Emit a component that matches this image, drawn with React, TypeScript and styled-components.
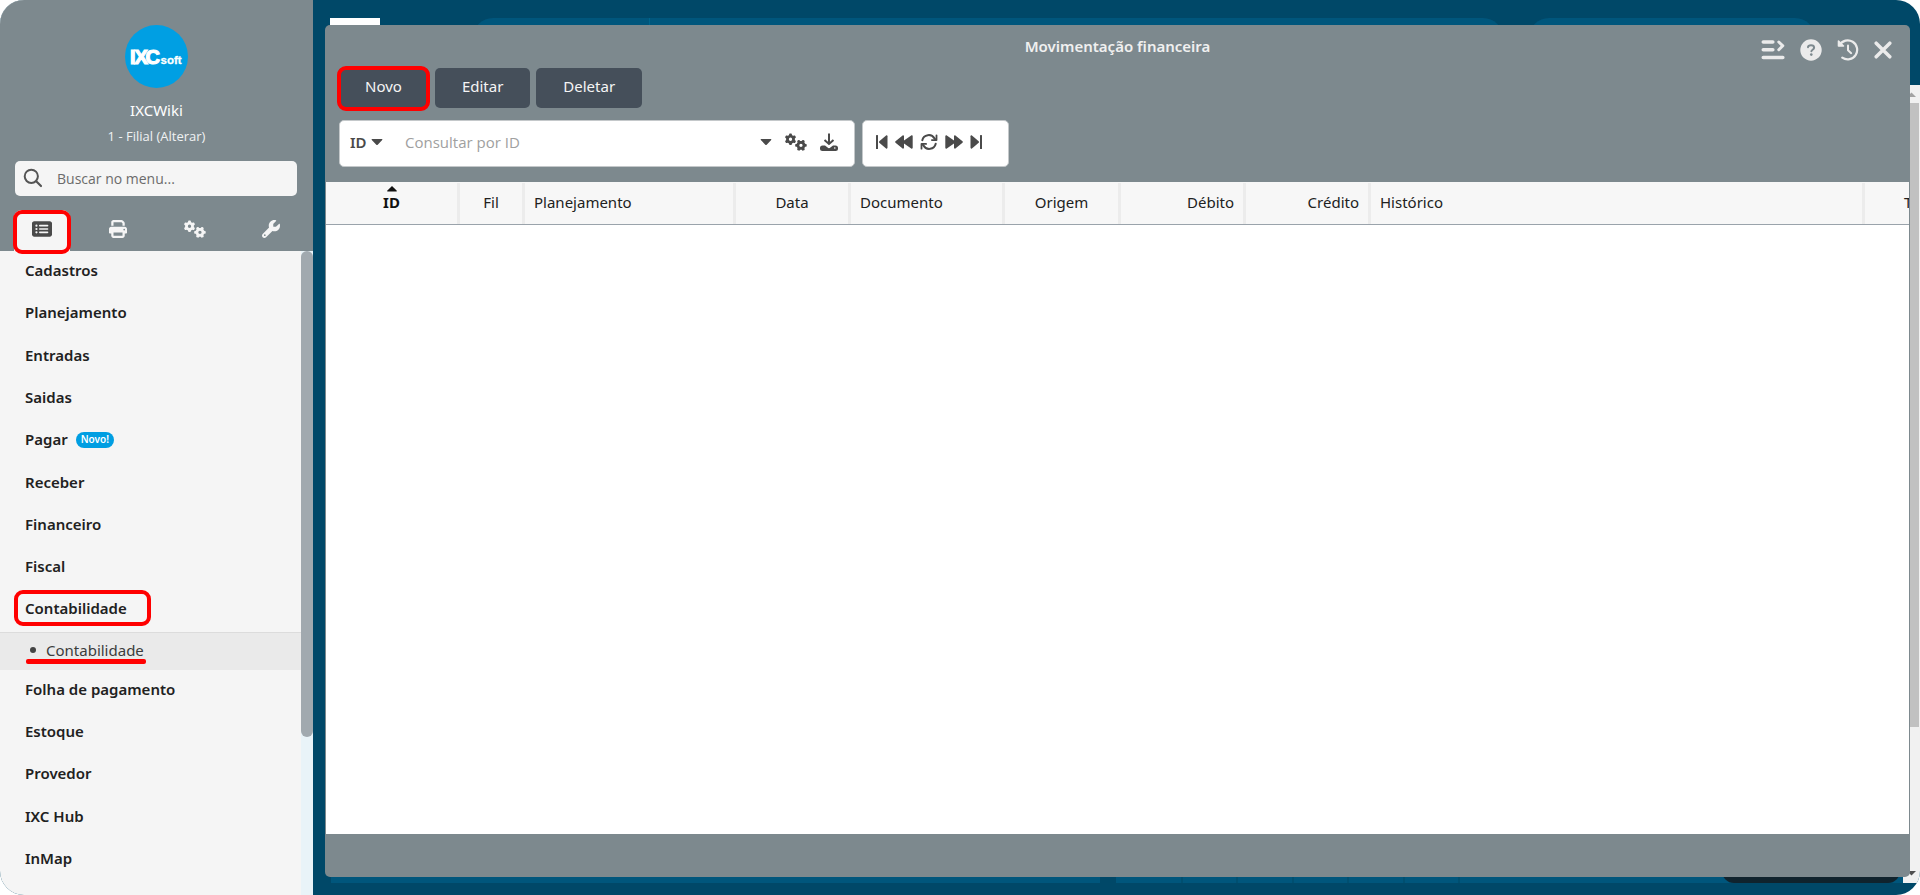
import React from "react";
import styled, { createGlobalStyle, css } from "styled-components";
import { FaRectangleList, FaPrint, FaGears, FaWrench } from "react-icons/fa6";

const Global = createGlobalStyle`
  *, *::before, *::after { box-sizing: border-box; }
  body { margin: 0; background: #fff; font-family: "Noto Sans", "Open Sans", sans-serif; font-size: 15px; }
  button, input, select { font: inherit; }
  button { border: 0; margin: 0; padding: 0; background: none; cursor: pointer; }
  ul { list-style: none; margin: 0; padding: 0; }
`;

const Screen = styled.div`
  position: relative;
  display: flex;
  min-height: 100vh;
  height: 100vh;
  border-radius: 24px;
  overflow: hidden;
  background: #004868;
`;

/* ---------- sidebar ---------- */
const Sidebar = styled.aside`
  flex: 0 0 313px;
  display: flex;
  flex-direction: column;
  background: #f5f5f5;
`;

const Profile = styled.header`
  display: flex;
  flex-direction: column;
  align-items: center;
  padding-top: 25px;
  background: #7d898e;
  color: #fff;
`;

const UserName = styled.div`
  margin-top: 12px;
  font-size: 15px;
  line-height: 20px;
`;

const Branch = styled.a`
  margin-top: 6px;
  font-family: "Open Sans", "Noto Sans", sans-serif;
  font-size: 13px;
  line-height: 20px;
  color: #f0f2f3;
  text-decoration: none;
`;

const SearchBox = styled.label`
  align-self: stretch;
  display: flex;
  align-items: center;
  gap: 14px;
  height: 35px;
  margin: 15px 16px 0 15px;
  padding: 0 0 1px 8px;
  border-radius: 5px;
  background: #f5f5f5;
  color: #555;
`;

const SearchInput = styled.input`
  flex: 1;
  min-width: 0;
  border: 0;
  padding: 0;
  outline: 0;
  background: transparent;
  font-family: "Open Sans", "Noto Sans", sans-serif;
  font-size: 14px;
  &::placeholder { color: #6b6b6b; opacity: 1; }
`;

const marked = css`
  &::after {
    content: "";
    position: absolute;
    border: 4px solid #ff0000;
    border-radius: 9px;
    pointer-events: none;
  }
`;

const Tabs = styled.nav`
  align-self: stretch;
  display: flex;
  gap: 20px;
  height: 41px;
  margin-top: 14px;
  padding: 0 14px;
`;

const Tab = styled.button<{ $active?: boolean }>`
  position: relative;
  flex: 1;
  display: flex;
  align-items: center;
  justify-content: center;
  padding-bottom: 3px;
  color: #f5f5f5;
  border-radius: 8px 8px 0 0;
  ${(p) => p.$active && css`
    background: #f5f5f5;
    color: #4a4a4a;
    ${marked}
    &::after { inset: 0 -1px -3px; z-index: 1; }
  `}
`;

const MenuArea = styled.div`
  flex: 1;
  min-height: 0;
  display: flex;
`;

const MenuList = styled.ul`
  flex: 1;
  min-width: 0;
  display: flex;
  flex-direction: column;
  padding-bottom: 14px;
  overflow: hidden;
`;

const MenuItem = styled.li`
  flex: 1 0 auto;
  display: flex;
  flex-direction: column;
`;

const MenuLink = styled.a`
  flex: 1 0 42px;
  display: flex;
  align-items: center;
  gap: 8px;
  padding: 0 0 4px 25px;
  font-size: 15px;
  font-weight: 600;
  line-height: 20px;
  color: #212121;
  text-decoration: none;
`;

const MenuLabel = styled.span<{ $marked?: boolean }>`
  position: relative;
  ${(p) => p.$marked && css`
    ${marked}
    &::after { inset: -8px -24px -8px -11px; }
  `}
`;

const NewTag = styled.span`
  height: 16px;
  margin-top: 2px;
  padding: 0 5px;
  border-radius: 8px;
  background: #009ee2;
  color: #fff;
  font-size: 10px;
  font-weight: 600;
  line-height: 15px;
`;

const SubLink = styled.a`
  display: flex;
  align-items: center;
  gap: 10px;
  height: 38px;
  padding: 0 0 2px 30px;
  border-top: 1px solid #dcdcdc;
  background: #eaeaea;
  color: #3c3c3c;
  font-size: 15px;
  line-height: 20px;
  text-decoration: none;
  &::before {
    content: "";
    width: 6px;
    height: 6px;
    border-radius: 3px;
    background: #444;
  }
`;

const SubLabel = styled.span`
  position: relative;
  &::after {
    content: "";
    position: absolute;
    left: -20px;
    right: -2px;
    bottom: -4px;
    height: 5px;
    border-radius: 2px;
    background: #ff0000;
  }
`;

const ScrollTrack = styled.div`
  flex: 0 0 12px;
  background: #e9f3f8;
`;

const ScrollThumb = styled.div`
  height: 75.5%;
  border-radius: 6px;
  background: #a1a9af;
`;

/* ---------- desktop behind the window ---------- */
const Desktop = styled.main`
  position: relative;
  flex: 1;
  min-width: 0;
  display: flex;
  padding: 25px 10px 18px 12px;
`;

const Shape = styled.div<{ $left?: number; $right?: number; $width?: number; $top?: number; $bottom?: number; $height: number; $color: string; $radius?: string }>`
  position: absolute;
  left: ${(p) => (p.$left === undefined ? "auto" : `${p.$left}px`)};
  right: ${(p) => (p.$right === undefined ? "auto" : `${p.$right}px`)};
  width: ${(p) => (p.$width === undefined ? "auto" : `${p.$width}px`)};
  top: ${(p) => (p.$top === undefined ? "auto" : `${p.$top}px`)};
  bottom: ${(p) => (p.$bottom === undefined ? "auto" : `${p.$bottom}px`)};
  height: ${(p) => p.$height}px;
  border-radius: ${(p) => p.$radius ?? "0"};
  background: ${(p) => p.$color};
`;

const PageScroll = styled.div`
  position: absolute;
  top: 85px;
  right: 0;
  bottom: 12px;
  width: 17px;
  display: flex;
  flex-direction: column;
  align-items: center;
  justify-content: space-between;
  background: #f1f1f1;
`;

const PageThumb = styled.div`
  flex: 0 1 624px;
  width: 15px;
  margin-bottom: auto;
  background: #c1c1c1;
`;

const ScrollArrow = styled.svg`
  flex: none;
  display: block;
`;

/* ---------- window ---------- */
const Window = styled.section`
  position: relative;
  flex: 1;
  min-width: 0;
  display: flex;
  flex-direction: column;
  border-radius: 5px;
  overflow: hidden;
  background: #7d898e;
`;

const TitleBar = styled.div`
  display: grid;
  grid-template-columns: 1fr auto 1fr;
  height: 42px;
`;

const Title = styled.h1`
  grid-column: 2;
  margin: 11px 0 0;
  font-size: 15px;
  font-weight: 600;
  line-height: 20px;
  color: #f0f0f0;
`;

const WindowActions = styled.div`
  justify-self: end;
  display: flex;
  align-items: center;
  gap: 15px;
  padding: 8px 18px 0 0;
  color: #ebebeb;
`;

const IconButton = styled.button`
  display: flex;
  align-items: center;
  justify-content: center;
  color: inherit;
`;

const Actions = styled.div`
  display: flex;
  gap: 6px;
  padding: 1px 13px 0;
`;

const ActionButton = styled.button<{ $marked?: boolean }>`
  position: relative;
  height: 40px;
  padding: 0 27px 4px;
  border-radius: 5px;
  background: #454f5a;
  color: #f5f5f5;
  font-size: 15px;
  ${(p) => p.$marked && css`
    ${marked}
    &::after { inset: -2px -1px -3px; }
  `}
`;

const Toolbar = styled.div`
  display: flex;
  gap: 7px;
  padding: 12px 14px 15px;
`;

const Group = styled.div<{ $width: number; $gap: number }>`
  flex: 0 1 ${(p) => p.$width}px;
  display: flex;
  align-items: center;
  gap: ${(p) => p.$gap}px;
  height: 47px;
  padding: 0 16px 3px 10px;
  border: 1px solid #c4c8ca;
  border-radius: 5px;
  background: #fff;
  color: #4a4a4a;
`;

const PagerGroup = styled(Group)`
  padding-left: 13px;
`;

const FieldWrap = styled.div`
  display: flex;
  align-items: center;
  gap: 4px;
`;

const FieldSelect = styled.select`
  appearance: none;
  border: 0;
  padding: 0;
  outline: 0;
  background: transparent;
  color: #4a4a4a;
  font-size: 15px;
  font-weight: 600;
`;

const QueryInput = styled.input`
  flex: 1;
  min-width: 0;
  border: 0;
  padding: 0 0 0 9px;
  outline: 0;
  background: transparent;
  font-family: "Open Sans", "Noto Sans", sans-serif;
  font-size: 15px;
  &::placeholder { color: #a0a0a0; opacity: 1; }
`;

const TableArea = styled.div`
  flex: 1;
  min-height: 0;
  margin: 0 1px;
  overflow: hidden;
  background: #fff;
`;

const Table = styled.table`
  width: 100%;
  table-layout: fixed;
  border-collapse: separate;
  border-spacing: 0;
`;

const Th = styled.th<{ $width?: number; $align?: string; $sorted?: boolean }>`
  width: ${(p) => (p.$width ? `${p.$width}px` : "auto")};
  height: 43px;
  padding: 0 12px 12px 9px;
  border-bottom: 1px solid #9aa3ab;
  background: linear-gradient(#ececec, #ececec) right bottom / 3px 41px no-repeat #f7f7f7;
  color: ${(p) => (p.$sorted ? "#111" : "#212121")};
  font-size: 15px;
  font-weight: ${(p) => (p.$sorted ? 700 : 400)};
  line-height: 20px;
  text-align: ${(p) => p.$align ?? "left"};
  vertical-align: bottom;
  white-space: nowrap;
  overflow: hidden;
  &:last-child { padding: 0 0 12px 39px; background-image: none; }
`;

const SortArrow = styled.svg`
  display: block;
  margin: 0 auto;
`;

const Footer = styled.footer`
  flex: 0 0 43px;
`;

const Logo = () => (
  <svg width="63" height="63" viewBox="0 0 63 63" role="img" aria-label="IXCsoft">
    <circle cx="31.5" cy="31.5" r="31.5" fill="#009fe3" />
    <g fill="#fff" fontFamily="Liberation Sans, sans-serif" fontWeight="700">
      <text x="5 9.500 20.500" y="39" stroke="#fff" fontSize="20" strokeWidth="1.200">IXC</text>
      <text x="35.500" y="39" fontSize="11.500" stroke="#fff" strokeWidth=".3">soft</text>
    </g>
  </svg>
);

const SearchIcon = () => (
  <svg width="20" height="20" viewBox="0 0 20 20" fill="none" stroke="#555" strokeWidth="2" strokeLinecap="round">
    <circle cx="8.3" cy="8.3" r="6.6" />
    <path d="M13.2 13.2L18 18" strokeWidth="2.2" />
  </svg>
);

const Caret = () => (
  <svg width="12" height="8" viewBox="0 0 12 8" fill="#4a4a4a">
    <path d="M1.3 1h9.4c.6 0 .9.6.5 1L6.7 6.700a1 1 0 0 1-1.400 0L.8 2C.4 1.600.7 1 1.300 1z" />
  </svg>
);

const DownloadIcon = () => (
  <svg width="18" height="18" viewBox="0 0 18 18" fill="none" stroke="#4a4a4a" strokeWidth="2">
    <path d="M9 .5V10M4.500 7L9 11l4.500-4" />
    <path d="M0 15a2.500 2.500 0 0 1 2.500-2.500H5l2.600 2.100c.8.7 2 .7 2.800 0l2.600-2.100h2.500A2.500 2.500 0 0 1 18 15v.5a2.500 2.500 0 0 1-2.500 2.500h-13A2.500 2.500 0 0 1 0 15.500z" fill="#4a4a4a" stroke="none" />
    <circle cx="14.800" cy="15" r=".8" fill="#fff" stroke="none" />
  </svg>
);

const FirstIcon = () => (
  <svg width="12" height="14" viewBox="0 0 12 14" fill="#4a4a4a">
    <rect x="0" y="0" width="2" height="14" rx=".5" />
    <path d="M11.500 1.200v11.600c0 .8-.8 1.100-1.400.6L3.300 7.700a1 1 0 0 1 0-1.400L10.100.6c.6-.5 1.400-.2 1.400.6z" />
  </svg>
);

const RewindIcon = () => (
  <svg width="18" height="14" viewBox="0 0 18 14" fill="#4a4a4a">
    <path d="M9 1.200V5.500L16.200.5c.6-.4 1.500-.1 1.500.7v11.600c0 .8-.9 1.100-1.500.7L9 8.500v4.300c0 .8-.8 1.100-1.400.6L.5 7.700a1 1 0 0 1 0-1.400L7.600.6C8.200.1 9 .4 9 1.200z" />
  </svg>
);

const Flipped = styled.span`
  display: flex;
  transform: rotate(180deg);
`;

const RefreshIcon = () => (
  <svg width="18" height="16" viewBox="0 0 18 16" fill="none" stroke="#4a4a4a" strokeWidth="2" strokeLinecap="round">
    <path d="M2.300 6.200A6.600 6.600 0 0 1 14.500 4.500L15.500 5.600M15.700 9.800A6.600 6.600 0 0 1 3.500 11.500L2.500 10.400" />
    <path d="M16.500 1.300v4.800h-4.600M1.500 14.700V9.900h4.600" strokeLinejoin="round" strokeWidth="1.800" />
  </svg>
);

const ListArrowIcon = () => (
  <svg width="24" height="22" viewBox="0 0 24 22" fill="none" stroke="#ebebeb" strokeWidth="3.600" strokeLinecap="round" strokeLinejoin="round">
    <path d="M2.300 3h9.500M2.300 10.700h9.500M2.300 18.500h19.500" />
    <path d="M17.800 3l4 3.800-4 3.900" strokeWidth="3" />
  </svg>
);

const HelpIcon = () => (
  <svg width="22" height="22" viewBox="0 0 22 22" fill="none">
    <circle cx="11" cy="11" r="10.700" fill="#ebebeb" />
    <path d="M8 8.200C8.200 6.900 9.400 6.300 11 6.300c1.900 0 3.100.9 3.100 2.400 0 1.900-2.700 2.100-2.700 3.600" stroke="#7d898e" strokeWidth="2" strokeLinecap="round" />
    <circle cx="11.300" cy="15.600" r="1.300" fill="#7d898e" />
  </svg>
);

const HistoryIcon = () => (
  <svg width="22" height="22" viewBox="0 0 22 22" fill="none" stroke="#ebebeb" strokeWidth="2.200" strokeLinecap="round" strokeLinejoin="round">
    <path d="M2.500 6A9.500 9.500 0 1 1 5.300 18.700" />
    <path d="M1.500 2v5h5z" fill="#ebebeb" strokeWidth="1.600" />
    <path d="M11 6.500v4.800l3.200 2.900" strokeWidth="2" />
  </svg>
);

const CloseIcon = () => (
  <svg width="18" height="18" viewBox="0 0 18 18" fill="none" stroke="#ebebeb" strokeWidth="3.500" strokeLinecap="round">
    <path d="M2.200 2.200l13.600 13.600M15.800 2.200L2.200 15.800" />
  </svg>
);

type Item = { label: string; tag?: string; marked?: boolean; children?: string[] };
const menu: Item[] = [
  { label: "Cadastros" },
  { label: "Planejamento" },
  { label: "Entradas" },
  { label: "Saidas" },
  { label: "Pagar", tag: "Novo!" },
  { label: "Receber" },
  { label: "Financeiro" },
  { label: "Fiscal" },
  { label: "Contabilidade", marked: true, children: ["Contabilidade"] },
  { label: "Folha de pagamento" },
  { label: "Estoque" },
  { label: "Provedor" },
  { label: "IXC Hub" },
  { label: "InMap" },
];

const columns = [
  { label: "ID", width: 134, align: "center", sorted: true },
  { label: "Fil", width: 65, align: "center" },
  { label: "Planejamento", width: 211 },
  { label: "Data", width: 115, align: "center" },
  { label: "Documento", width: 154 },
  { label: "Origem", width: 116, align: "center" },
  { label: "Débito", width: 125, align: "right" },
  { label: "Crédito", width: 125, align: "right" },
  { label: "Histórico" },
  { label: "T", width: 44 },
];

const tileBorders = [868, 923, 979, 1034, 1090, 1145];

export default function App() {
  return (
    <>
      <Global />
      <Screen>
        <Sidebar>
          <Profile>
            <Logo />
            <UserName>IXCWiki</UserName>
            <Branch href="#">1 - Filial (Alterar)</Branch>
            <SearchBox>
              <SearchIcon />
              <SearchInput placeholder="Buscar no menu..." aria-label="Buscar no menu" />
            </SearchBox>
            <Tabs>
              <Tab $active aria-label="Menu"><FaRectangleList size={20} /></Tab>
              <Tab aria-label="Imprimir"><FaPrint size={18} /></Tab>
              <Tab aria-label="Configurações"><FaGears size={22} /></Tab>
              <Tab aria-label="Ferramentas"><FaWrench size={18} /></Tab>
            </Tabs>
          </Profile>
          <MenuArea>
            <MenuList>
              {menu.map((item) => (
                <MenuItem key={item.label}>
                  <MenuLink href="#">
                    <MenuLabel $marked={item.marked}>{item.label}</MenuLabel>
                    {item.tag && <NewTag>{item.tag}</NewTag>}
                  </MenuLink>
                  {item.children?.map((child) => (
                    <SubLink href="#" key={child}>
                      <SubLabel>{child}</SubLabel>
                    </SubLink>
                  ))}
                </MenuItem>
              ))}
            </MenuList>
            <ScrollTrack><ScrollThumb /></ScrollTrack>
          </MenuArea>
        </Sidebar>
        <Desktop>
          <Shape $left={17} $width={50} $top={18} $height={20} $color="#fff" />
          <Shape $left={160} $right={417} $top={18} $height={40} $color="#00567c" $radius="20px" />
          <Shape $left={336} $width={1} $top={18} $height={20} $color="#00658c" />
          <Shape $right={105} $width={286} $top={18} $height={40} $color="#00567c" $radius="20px" />
          <Shape $left={18} $right={820} $bottom={12} $height={20} $color="#00567c" />
          <Shape $left={803} $right={17} $bottom={12} $height={20} $color="#00567c" />
          {tileBorders.map((x) => (
            <Shape key={x} $left={x} $width={2} $bottom={12} $height={20} $color="#004f70" />
          ))}
          <Shape $right={20} $width={178} $bottom={12} $height={30} $color="#10232d" $radius="12px" />
          <PageScroll>
            <ScrollArrow width="17" height="18" viewBox="0 0 17 18" fill="#a3a3a3"><path d="M4 12l4.500-4.500L13 12z" /></ScrollArrow>
            <PageThumb />
            <ScrollArrow width="17" height="17" viewBox="0 0 17 17" fill="#505050"><path d="M4 5h9L8.500 9.500z" /></ScrollArrow>
          </PageScroll>
          <Window>
            <TitleBar>
              <Title>Movimentação financeira</Title>
              <WindowActions>
                <IconButton aria-label="Opções"><ListArrowIcon /></IconButton>
                <IconButton aria-label="Ajuda"><HelpIcon /></IconButton>
                <IconButton aria-label="Histórico de uso"><HistoryIcon /></IconButton>
                <IconButton aria-label="Fechar"><CloseIcon /></IconButton>
              </WindowActions>
            </TitleBar>
            <Actions>
              <ActionButton $marked>Novo</ActionButton>
              <ActionButton>Editar</ActionButton>
              <ActionButton>Deletar</ActionButton>
            </Actions>
            <Toolbar>
              <Group $width={516} $gap={13}>
                <FieldWrap>
                  <FieldSelect aria-label="Campo de busca"><option>ID</option></FieldSelect>
                  <Caret />
                </FieldWrap>
                <QueryInput placeholder="Consultar por ID" aria-label="Consultar por ID" />
                <IconButton aria-label="Mostrar opções"><Caret /></IconButton>
                <IconButton aria-label="Configurar"><FaGears size={22} /></IconButton>
                <IconButton aria-label="Exportar"><DownloadIcon /></IconButton>
              </Group>
              <PagerGroup $width={147} $gap={7}>
                <IconButton aria-label="Primeira página"><FirstIcon /></IconButton>
                <IconButton aria-label="Página anterior"><RewindIcon /></IconButton>
                <IconButton aria-label="Atualizar"><RefreshIcon /></IconButton>
                <IconButton aria-label="Próxima página"><Flipped><RewindIcon /></Flipped></IconButton>
                <IconButton aria-label="Última página"><Flipped><FirstIcon /></Flipped></IconButton>
              </PagerGroup>
            </Toolbar>
            <TableArea>
              <Table>
                <thead>
                  <tr>
                    {columns.map((c) => (
                      <Th key={c.label} $width={c.width} $align={c.align} $sorted={c.sorted}>
                        {c.sorted && (
                          <SortArrow width="10" height="6" viewBox="0 0 10 6" fill="#111"><path d="M5 0l4.600 4.600c.4.500.2 1-.4 1H.8c-.6 0-.8-.5-.4-1z" /></SortArrow>
                        )}
                        {c.label}
                      </Th>
                    ))}
                  </tr>
                </thead>
              </Table>
            </TableArea>
            <Footer />
          </Window>
        </Desktop>
      </Screen>
    </>
  );
}
